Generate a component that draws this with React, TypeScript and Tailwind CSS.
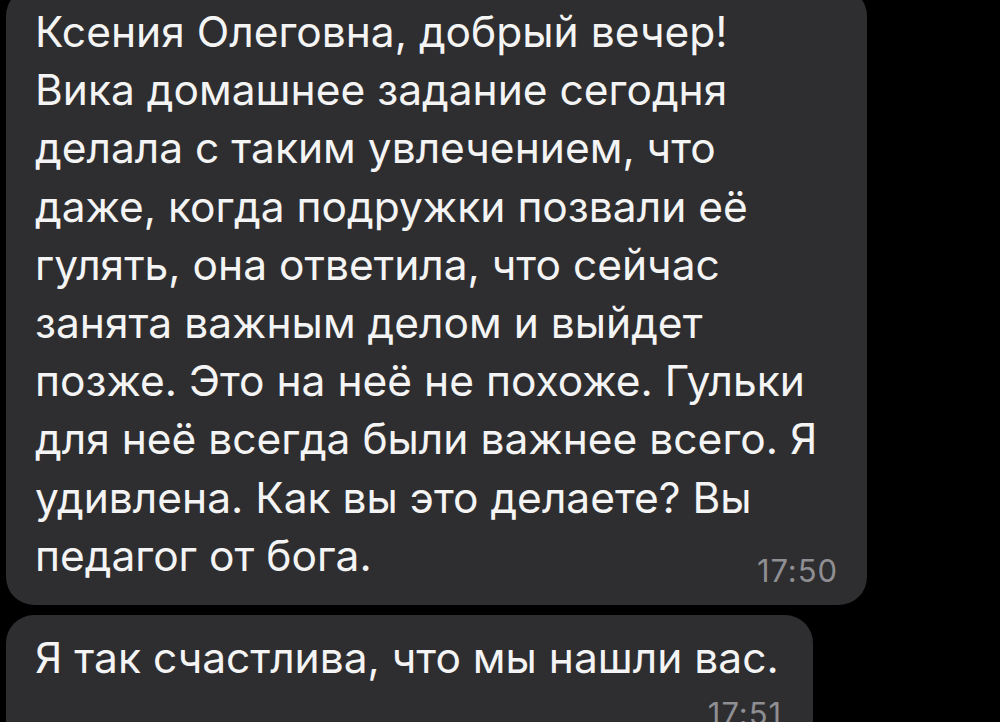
const lines = [
  'Ксения Олеговна, добрый вечер!',
  'Вика домашнее задание сегодня',
  'делала с таким увлечением, что',
  'даже, когда подружки позвали её',
  'гулять, она ответила, что сейчас',
  'занята важным делом и выйдет',
  'позже. Это на неё не похоже. Гульки',
  'для неё всегда были важнее всего. Я',
  'удивлена. Как вы это делаете? Вы',
  'педагог от бога.',
];

export default function App() {
  return (
    <div className="h-[722px] overflow-hidden bg-black pl-[6px] font-['Inter',sans-serif] text-[#f4f4f4]">
      <div className="flex flex-col gap-[10px]">
        <div className="relative -mt-[12px] w-[861px] rounded-[28px] bg-[#2e2e30] pt-[15px] pb-[20px] pl-[29px]">
          <div className="text-[42.5px] leading-[58.2px] whitespace-nowrap">
            {lines.map((l) => (
              <div key={l}>{l}</div>
            ))}
          </div>
          <span className="absolute right-[29px] bottom-[19px] text-[31px] leading-none tracking-[0.03em] text-[#8f8f93]">
            17:50
          </span>
        </div>
        <div className="w-[807px] rounded-[28px] bg-[#2e2e30] pt-[14px] pb-[20px] pl-[29px] pr-[31px]">
          <div className="text-[42.5px] leading-[58.2px] whitespace-nowrap">
            Я так счастлива, что мы нашли вас.
          </div>
          <div className="mt-[11px] text-right text-[31px] leading-none tracking-[0.03em] text-[#8f8f93]">17:51</div>
        </div>
      </div>
    </div>
  );
}
